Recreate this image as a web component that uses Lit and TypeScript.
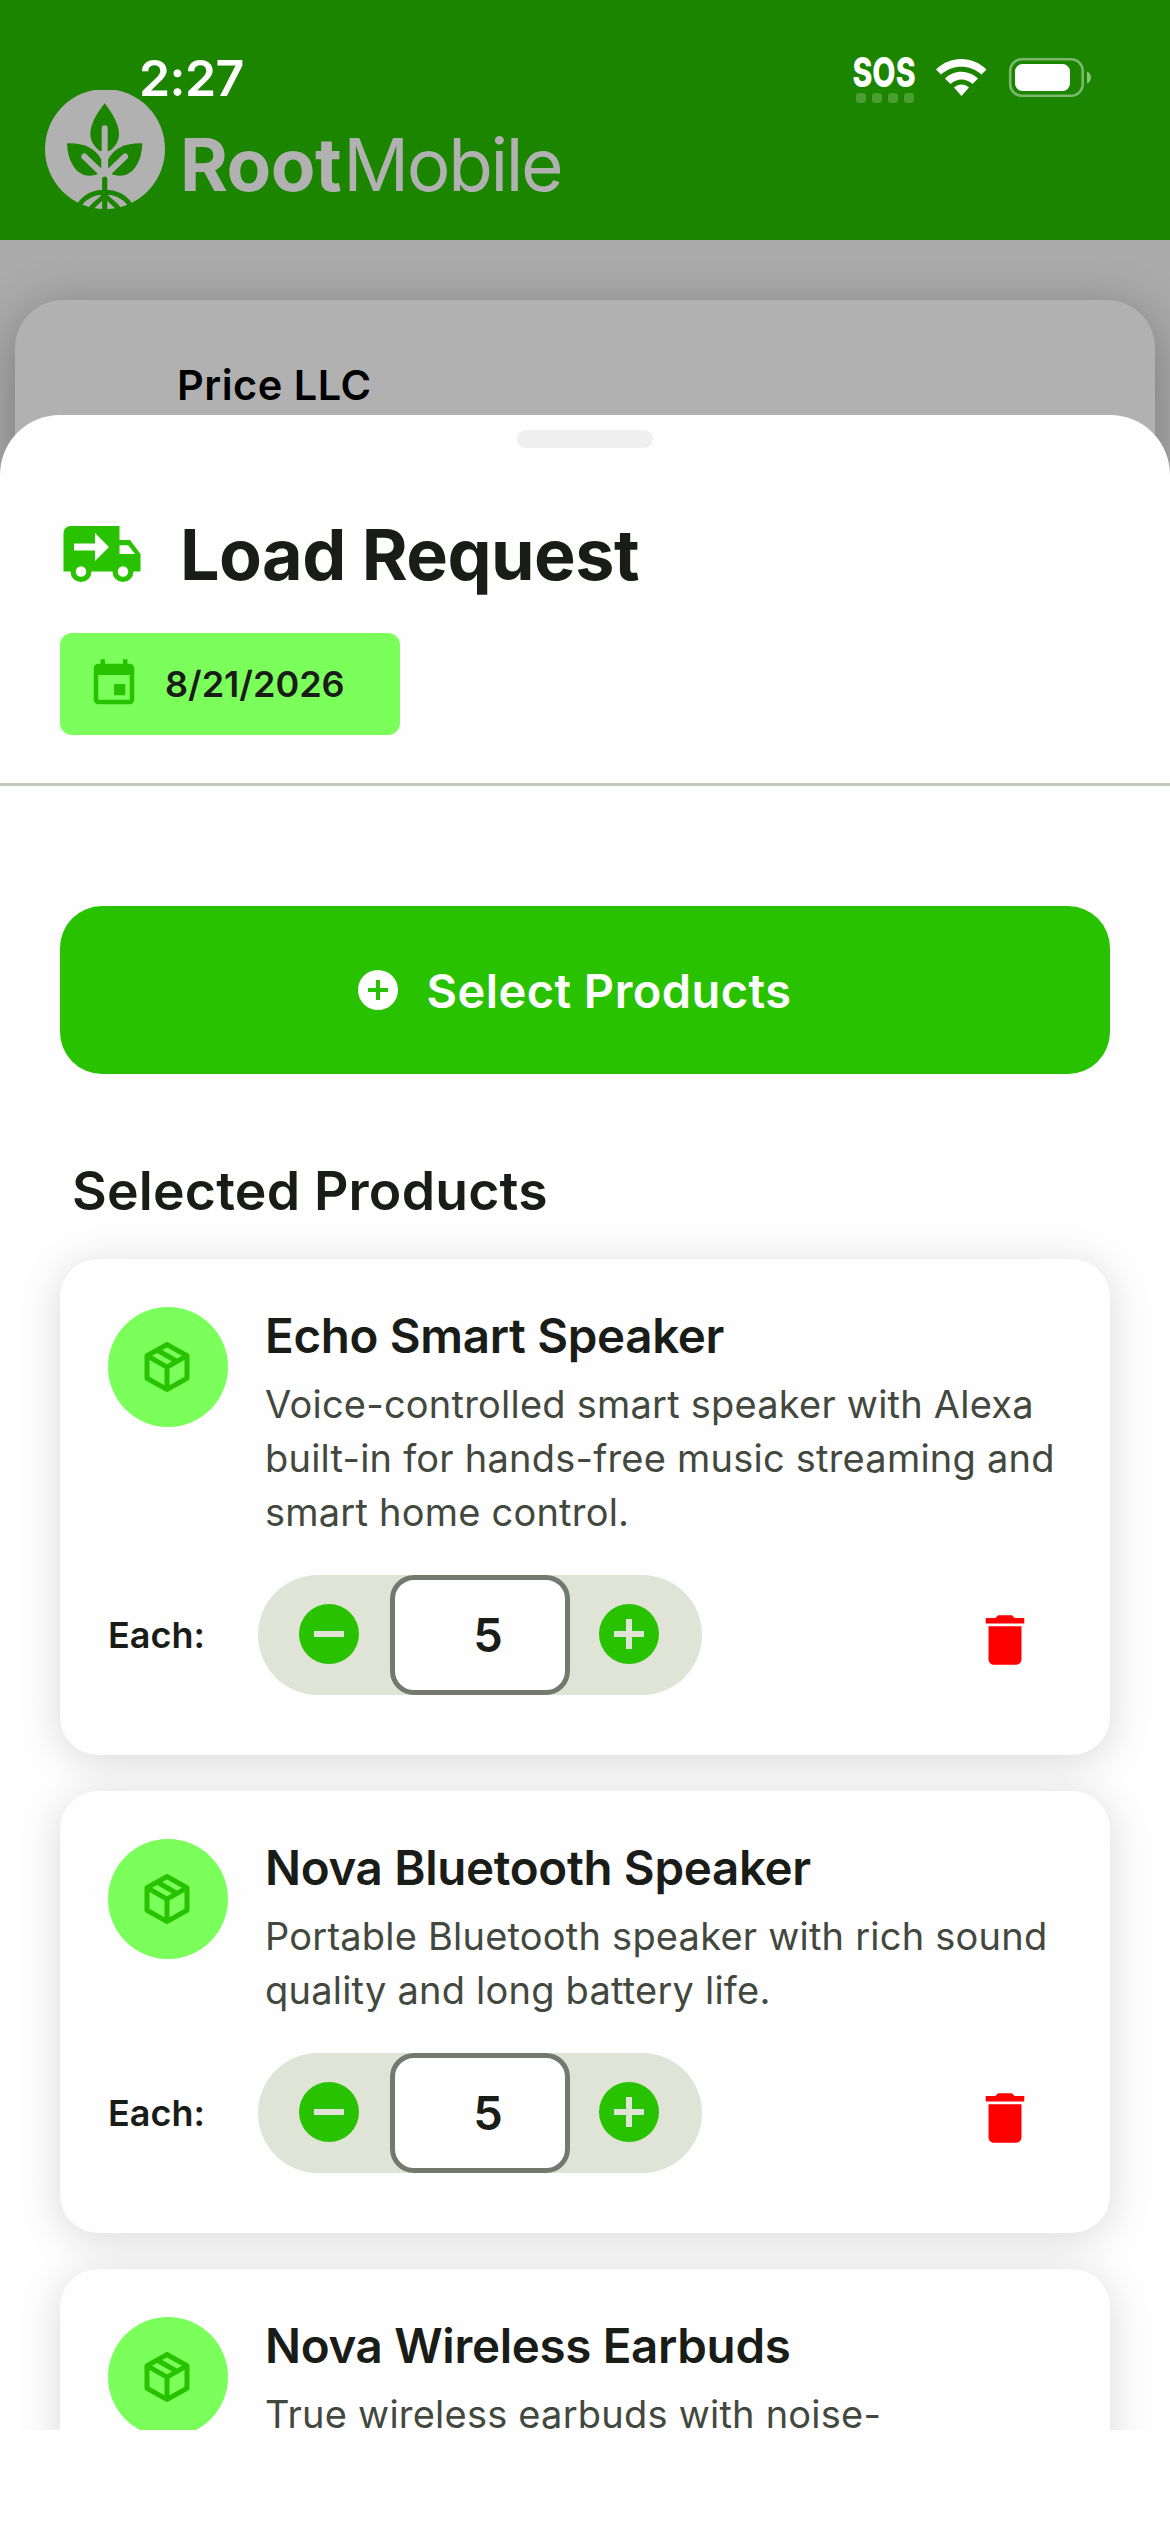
import { LitElement, html, css, svg } from "lit";
import { customElement, property, state } from "lit/decorators.js";

const PATHS = {
  truck:
    "M3 4a2 2 0 0 0-2 2v11h2a3 3 0 0 0 6 0h6a3 3 0 0 0 6 0h2v-5l-3-4h-3V4H3zm7 2 4 4-4 4v-3H4V9h6V6zm7 3.5h2.5l1.96 2.5H17V9.5zM6 15.5a1.5 1.5 0 1 1 0 3 1.5 1.5 0 0 1 0-3zm12 0a1.5 1.5 0 1 1 0 3 1.5 1.5 0 0 1 0-3z",
  event:
    "M17 12h-5v5h5v-5zM16 1v2H8V1H6v2H5c-1.11 0-1.99.9-1.99 2L3 19c0 1.1.89 2 2 2h14c1.1 0 2-.9 2-2V5c0-1.1-.9-2-2-2h-1V1h-2zm3 18H5V8h14v11z",
  add: "M12 2a10 10 0 1 0 0 20 10 10 0 0 0 0-20zm5 11h-4v4h-2v-4H7v-2h4V7h2v4h4v2z",
  remove: "M12 2a10 10 0 1 0 0 20 10 10 0 0 0 0-20zm5 11H7v-2h10v2z",
  box: "M21 16.5c0 .38-.21.71-.53.88l-7.9 4.44c-.16.12-.36.18-.57.18s-.41-.06-.57-.18l-7.9-4.44A.99.99 0 0 1 3 16.5v-9c0-.38.21-.71.53-.88l7.9-4.44c.16-.12.36-.18.57-.18s.41.06.57.18l7.9 4.44c.32.17.53.5.53.88v9zM12 4.15l-1.89 1.07L16 8.61l1.96-1.11L12 4.15zM6.04 7.5 12 10.85l1.96-1.1-5.88-3.4L6.04 7.5zM5 15.91l6 3.38v-6.71L5 9.21v6.7zm14 0v-6.7l-6 3.37v6.71l6-3.38z",
  trash:
    "M6 19c0 1.1.9 2 2 2h8c1.1 0 2-.9 2-2V7H6v12zM19 4h-3.5l-1-1h-5l-1 1H5v2h14V4z",
};

@customElement("app-icon")
class AppIcon extends LitElement {
  @property() name: keyof typeof PATHS = "add";
  static styles = css`
    :host { display: block; flex: none; }
    svg { display: block; width: 100%; height: 100%; fill: currentColor; }
  `;
  render() {
    return html`<svg viewBox="0 0 24 24"><path fill-rule="evenodd" d=${PATHS[this.name]}></path></svg>`;
  }
}

@customElement("status-bar")
class StatusBar extends LitElement {
  static styles = css`
    :host { display: flex; justify-content: space-between; align-items: flex-start; height: 120px; padding: 0 80px 0 139px; box-sizing: border-box; color: #fff; }
    .time { margin-top: 48px; font-size: 50px; line-height: 60px; font-weight: 600; letter-spacing: -0.6px; }
    .icons { display: block; margin-top: 50px; width: 240px; height: 60px; }
    .sos { font-family: Inter, sans-serif; font-weight: 800; font-size: 41px; }
  `;
  render() {
    return html`
      <div class="time">2:27</div>
      <svg class="icons" viewBox="850 50 240 60" fill="#fff" overflow="visible">
        <text class="sos" x="852.500" y="86.500" textLength="63" lengthAdjust="spacingAndGlyphs">SOS</text>
        ${[856, 872, 888, 904].map((x) => svg`<rect x=${x} y="93" width="10" height="10" rx="3" opacity=".2"></rect>`)}
        <path d="M936 69.500C950 55.500 972.500 55.500 986.500 69.500L981.500 74.500C970 64 952.500 64 941 74.500z"></path>
        <path d="M945 78.500C954 69.500 968.500 69.500 978 78.500L972.500 84C966 78 957 78 950.500 84z"></path>
        <path d="M954 87.500C958.500 83.500 964.500 83.500 969 87.500L961.500 96z"></path>
        <rect x="1010.200" y="59.200" width="72.500" height="36.500" rx="11.500" fill="none" stroke="#fff" stroke-width="2.600" opacity=".42"></rect>
        <rect x="1015" y="64" width="55" height="27" rx="7.500"></rect>
        <path d="M1087 71.500C1092.300 73.500 1092.300 81.500 1087 83.500z" opacity=".5"></path>
      </svg>
    `;
  }
}

@customElement("product-card")
class ProductCard extends LitElement {
  @property() name = "";
  @property() description = "";
  @property({ type: Number }) quantity = 5;
  static styles = css`
    :host { display: block; background: #fefefe; border-radius: 38px; padding: 48px 48px 60px; box-shadow: 0 6px 42px rgba(0, 0, 0, 0.15); }
    .top { display: flex; gap: 37px; }
    .badge { flex: none; display: flex; align-items: center; justify-content: center; width: 120px; height: 120px; border-radius: 50%; background: #7aff5b; color: #28c200; }
    .badge app-icon { width: 60px; height: 60px; margin-right: 2px; }
    .name { font-size: 47.500px; line-height: 57px; font-weight: 600; color: #1a1c18; white-space: nowrap; letter-spacing: -0.33px; }
    .desc { margin-top: 13px; font-size: 38px; line-height: 54px; color: #43483e; white-space: pre; letter-spacing: 0.22px; }
    .bottom { display: flex; align-items: center; margin-top: 36px; height: 120px; }
    .label { width: 150px; font-size: 36px; font-weight: 600; color: #1a1c18; letter-spacing: 0; }
    .stepper { display: flex; align-items: center; width: 444px; height: 120px; border-radius: 60px; background: #dfe4d7; color: #28c200; }
    .stepper app-icon { width: 72px; height: 72px; margin-bottom: 2px; }
    .minus { margin-left: 35px; }
    .plus { margin-left: 23px; }
    .value { box-sizing: border-box; width: 180px; height: 120px; margin-left: 25px; border: 5px solid #73796e; border-radius: 24px; background: #fefefe; color: #1a1c18; font-size: 47px; line-height: 110px; font-weight: 600; text-align: center; padding-left: 16px; }
    .trash { width: 66px; height: 66px; margin: 10px 24px 0 auto; color: #f00; }
  `;
  render() {
    return html`
      <div class="top">
        <div class="badge"><app-icon name="box"></app-icon></div>
        <div>
          <div class="name">${this.name}</div>
          <div class="desc">${this.description}</div>
        </div>
      </div>
      <div class="bottom">
        <div class="label">Each:</div>
        <div class="stepper">
          <app-icon class="minus" name="remove"></app-icon>
          <div class="value">${this.quantity}</div>
          <app-icon class="plus" name="add"></app-icon>
        </div>
        <app-icon class="trash" name="trash"></app-icon>
      </div>
    `;
  }
}

@customElement("app-root")
class AppRoot extends LitElement {
  @state() products = [
    { name: "Echo Smart Speaker", description: "Voice-controlled smart speaker with Alexa\nbuilt-in for hands-free music streaming and\nsmart home control." },
    { name: "Nova Bluetooth Speaker", description: "Portable Bluetooth speaker with rich sound\nquality and long battery life." },
    { name: "Nova Wireless Earbuds", description: "True wireless earbuds with noise-" },
  ];
  static styles = css`
    :host { display: block; position: relative; width: 1170px; height: 2532px; overflow: hidden; background: #ababab; font-family: Inter, "Liberation Sans", sans-serif; }
    .header { display: flex; height: 240px; box-sizing: border-box; padding: 90px 45px 0; background: #1c8500; color: #b1b1b1; }
    .logo { width: 120px; height: 120px; flex: none; }
    .brand { margin: 31px 0 0 15px; font-size: 73px; line-height: 88px; white-space: nowrap; }
    .root { font-weight: 700; letter-spacing: -0.5px; }
    .mobile { font-weight: 400; margin-left: 2px; letter-spacing: -2.4px; }
    .account { margin: 60px 15px 0; height: 400px; box-sizing: border-box; border-radius: 48px; background: #b1b1b1; box-shadow: 0 12px 54px rgba(0, 0, 0, 0.3); padding: 60px 162px; font-size: 41.500px; line-height: 50px; font-weight: 600; letter-spacing: 0.5px; color: #000; }
    status-bar { position: absolute; left: 0; right: 0; top: 0; }
    .sheet { position: absolute; left: 0; right: 0; top: 415px; bottom: 0; display: flex; flex-direction: column; border-radius: 60px 60px 0 0; background: #fefefe; color: #1a1c18; }
    .handle { flex: none; width: 136px; height: 18px; margin: 15px auto 0; border-radius: 9px; background: #efefef; }
    .heading { flex: none; display: flex; align-items: center; margin: 64px 60px 0; height: 84px; gap: 36px; font-size: 70px; font-weight: 700; white-space: nowrap; letter-spacing: -0.55px; }
    .heading app-icon { width: 84px; height: 84px; color: #28c200; }
    .chip { flex: none; display: flex; align-items: center; gap: 24px; width: 340px; height: 102px; box-sizing: border-box; margin: 37px 60px 0; padding-left: 27px; border-radius: 12px; background: #7aff5b; font-size: 36px; font-weight: 600; }
    .chip app-icon { width: 54px; height: 54px; color: #28c200; }
    .rule { flex: none; height: 3px; margin-top: 48px; background: #c3c8bc; }
    .list { flex: 1; min-height: 0; overflow: hidden; padding: 120px 60px 0; margin-bottom: 102px; display: flex; flex-direction: column; }
    .select { flex: none; display: flex; align-items: center; justify-content: center; gap: 24px; height: 168px; padding-right: 24px; border-radius: 42px; background: #28c200; color: #fff; font-size: 47px; font-weight: 600; letter-spacing: 0.45px; }
    .select app-icon { width: 48px; height: 48px; margin-top: -1px; }
    .section { flex: none; margin: 84px 12px 0; height: 65px; line-height: 65px; font-size: 53.500px; font-weight: 600; letter-spacing: 0.2px; }
    .cards { display: flex; flex-direction: column; gap: 36px; margin-top: 36px; }
  `;
  render() {
    return html`
      <header class="header">
        <svg class="logo" viewBox="0 0 120 120">
          <circle cx="60" cy="59" r="60" fill="#b1b1b1"></circle>
          <g fill="#1c8500">
            <path d="M59.700 13.300C67 23 74 34 74 44C74 51 70 57 64.300 61H55C49.500 57 45.300 51 45.300 44C45.300 34 52 23 59.700 13.300z"></path>
            <path d="M22 53.300C36 52.500 50 57 56.300 69.500V77.500L52 84.600C48 86 43 86 39 85C28 81 22.500 68 22 53.300z"></path>
            <path d="M97.400 53.300C83.400 52.500 69.400 57 63.100 69.500V77.500L67.400 84.600C71.400 86 76.400 86 80.400 85C91.400 81 96.900 68 97.400 53.300z"></path>
          </g>
          <g fill="none" stroke="#b1b1b1" stroke-width="6" stroke-linecap="round">
            <path d="M59.700 38.300V84"></path>
            <path d="M39.300 66.500L59 85.500M80.100 66.500L60.400 85.500"></path>
          </g>
          <g fill="none" stroke="#1c8500" stroke-width="4.800">
            <path d="M59.700 89V120" stroke-linecap="round" stroke-width="5.200"></path>
            <path d="M34.500 114.500C46 98 73.500 98 85 114.500"></path>
            <path d="M59.700 104C56 111 49 113 45 120M59.700 104C63.400 111 70.400 113 74.400 120"></path>
          </g>
        </svg>
        <div class="brand"><span class="root">Root</span><span class="mobile">Mobile</span></div>
      </header>
      <div class="account">Price LLC</div>
      <status-bar></status-bar>
      <section class="sheet">
        <div class="handle"></div>
        <div class="heading"><app-icon name="truck"></app-icon><span>Load Request</span></div>
        <div class="chip"><app-icon name="event"></app-icon><span>8/21/2026</span></div>
        <div class="rule"></div>
        <div class="list">
          <div class="select"><app-icon name="add"></app-icon><span>Select Products</span></div>
          <div class="section">Selected Products</div>
          <div class="cards">
            ${this.products.map((p) => html`<product-card .name=${p.name} .description=${p.description}></product-card>`)}
          </div>
        </div>
      </section>
    `;
  }
}
